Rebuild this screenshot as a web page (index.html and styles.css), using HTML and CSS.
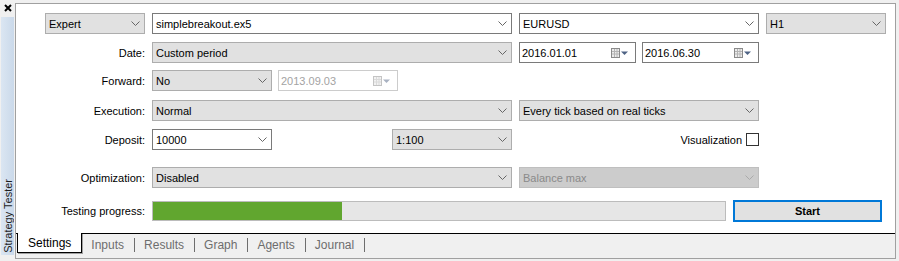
FILE: index.html
```html
<!DOCTYPE html>
<html lang="en">
<head>
  <meta charset="UTF-8">
  <title>Strategy Tester</title>
  <link rel="stylesheet" href="styles.css">
</head>
<body>
  <div class="app">
    <aside class="dock">
      <div class="dock-close">
        <svg width="8" height="8" viewBox="0 0 8 8"><path d="M1 1L7 7M7 1L1 7" stroke="#000" stroke-width="2"/></svg>
      </div>
      <div class="dock-tab"><span>Strategy Tester</span></div>
    </aside>

    <div class="window">
      <div class="panel">
        <div class="row r1">
          <div class="select gray w100"><span>Expert</span><svg class="chev" width="9" height="5" viewBox="0 0 9 5"><path d="M0.5 0.5L4.5 4.5L8.5 0.5" fill="none" stroke="#666"/></svg></div>
          <div class="select white w360 ml7"><span>simplebreakout.ex5</span><svg class="chev" width="9" height="5" viewBox="0 0 9 5"><path d="M0.5 0.5L4.5 4.5L8.5 0.5" fill="none" stroke="#666"/></svg></div>
          <div class="select white w240 ml7"><span>EURUSD</span><svg class="chev" width="9" height="5" viewBox="0 0 9 5"><path d="M0.5 0.5L4.5 4.5L8.5 0.5" fill="none" stroke="#666"/></svg></div>
          <div class="select gray w120 ml7"><span>H1</span><svg class="chev" width="9" height="5" viewBox="0 0 9 5"><path d="M0.5 0.5L4.5 4.5L8.5 0.5" fill="none" stroke="#666"/></svg></div>
        </div>

        <div class="row r2">
          <label class="label">Date:</label>
          <div class="select gray w360"><span>Custom period</span><svg class="chev" width="9" height="5" viewBox="0 0 9 5"><path d="M0.5 0.5L4.5 4.5L8.5 0.5" fill="none" stroke="#666"/></svg></div>
          <div class="date w117 ml7"><span>2016.01.01</span>
            <svg class="cal" width="17" height="10" viewBox="0 0 17 10"><rect x="0.5" y="0.5" width="8" height="9" fill="#ececec" stroke="#8a8a8a"/><path d="M3.5 1V9M6 1V9M1 3.5H8M1 6H8" stroke="#b4b4b4"/><path d="M10 3.5H17L13.5 7Z" fill="#4e6385"/></svg>
          </div>
          <div class="date w117 ml6"><span>2016.06.30</span>
            <svg class="cal" width="17" height="10" viewBox="0 0 17 10"><rect x="0.5" y="0.5" width="8" height="9" fill="#ececec" stroke="#8a8a8a"/><path d="M3.5 1V9M6 1V9M1 3.5H8M1 6H8" stroke="#b4b4b4"/><path d="M10 3.5H17L13.5 7Z" fill="#4e6385"/></svg>
          </div>
        </div>

        <div class="row r3">
          <label class="label">Forward:</label>
          <div class="select gray w120"><span>No</span><svg class="chev" width="9" height="5" viewBox="0 0 9 5"><path d="M0.5 0.5L4.5 4.5L8.5 0.5" fill="none" stroke="#666"/></svg></div>
          <div class="date disabled w120 ml6"><span>2013.09.03</span>
            <svg class="cal" width="17" height="10" viewBox="0 0 17 10"><rect x="0.5" y="0.5" width="8" height="9" fill="#f2f2f2" stroke="#c4c4c4"/><path d="M3.5 1V9M6 1V9M1 3.5H8M1 6H8" stroke="#dadada"/><path d="M10 3.5H17L13.5 7Z" fill="#a9b2c2"/></svg>
          </div>
        </div>

        <div class="row r4">
          <label class="label">Execution:</label>
          <div class="select gray w360"><span>Normal</span><svg class="chev" width="9" height="5" viewBox="0 0 9 5"><path d="M0.5 0.5L4.5 4.5L8.5 0.5" fill="none" stroke="#666"/></svg></div>
          <div class="select gray w240 ml7"><span>Every tick based on real ticks</span><svg class="chev" width="9" height="5" viewBox="0 0 9 5"><path d="M0.5 0.5L4.5 4.5L8.5 0.5" fill="none" stroke="#666"/></svg></div>
        </div>

        <div class="row r5">
          <label class="label">Deposit:</label>
          <div class="select white w120"><span>10000</span><svg class="chev" width="9" height="5" viewBox="0 0 9 5"><path d="M0.5 0.5L4.5 4.5L8.5 0.5" fill="none" stroke="#666"/></svg></div>
          <div class="select gray w120 ml120"><span>1:100</span><svg class="chev" width="9" height="5" viewBox="0 0 9 5"><path d="M0.5 0.5L4.5 4.5L8.5 0.5" fill="none" stroke="#666"/></svg></div>
          <div class="visual">
            <span>Visualization</span>
            <span class="checkbox"></span>
          </div>
        </div>

        <div class="row r6">
          <label class="label">Optimization:</label>
          <div class="select gray w360"><span>Disabled</span><svg class="chev" width="9" height="5" viewBox="0 0 9 5"><path d="M0.5 0.5L4.5 4.5L8.5 0.5" fill="none" stroke="#666"/></svg></div>
          <div class="select off w240 ml7"><span>Balance max</span><svg class="chev" width="9" height="5" viewBox="0 0 9 5"><path d="M0.5 0.5L4.5 4.5L8.5 0.5" fill="none" stroke="#aaa"/></svg></div>
        </div>

        <div class="row r7">
          <label class="label">Testing progress:</label>
          <div class="progress"><div class="progress-fill" style="width: 33%;"></div></div>
          <button class="start">Start</button>
        </div>
      </div>

      <div class="tabbar">
        <div class="tab active">Settings</div>
        <div class="tab">Inputs</div>
        <div class="tab">Results</div>
        <div class="tab">Graph</div>
        <div class="tab">Agents</div>
        <div class="tab">Journal</div>
      </div>
    </div>
  </div>
</body>
</html>
```

FILE: styles.css
```css
html, body {
  margin: 0;
  background: #f0f0f0;
}
body {
  font-family: "Liberation Sans", Arial, sans-serif;
  font-size: 11px;
  color: #000;
}
.app {
  display: flex;
  width: 899px;
  height: 261px;
}

/* left dock strip */
.dock {
  width: 15px;
  display: flex;
  flex-direction: column;
}
.dock-close {
  height: 17px;
  box-sizing: border-box;
  padding: 4px 0 0 4px;
}
.dock-close svg { display: block; }
.dock-tab {
  flex: 1;
  margin: 0 1px 6px 1px;
  background: linear-gradient(to right, #dbe6f2, #cad9ea);
  display: flex;
  flex-direction: column;
  justify-content: flex-end;
  align-items: center;
}
.dock-tab span {
  writing-mode: vertical-rl;
  transform: rotate(180deg);
  padding-top: 2px;
  font-size: 11px;
  color: #1e1e1e;
  white-space: nowrap;
}

/* window */
.window {
  margin-top: 3px;
  width: 881px;
  height: 256px;
  box-sizing: border-box;
  border: 1px solid #a0a0a0;
  display: flex;
  flex-direction: column;
}
.panel {
  height: 229px;
  background: #fff;
  padding-left: 29px;
  padding-top: 9px;
  box-sizing: border-box;
}
.row {
  display: flex;
  align-items: center;
  height: 21px;
}
.r2 { margin-top: 8px; }
.r3 { margin-top: 7px; }
.r4 { margin-top: 9px; }
.r5 { margin-top: 8px; }
.r6 { margin-top: 17px; }
.r7 { margin-top: 12px; height: 22px; }

.label {
  width: 100px;
  margin-right: 7px;
  text-align: right;
  white-space: nowrap;
}

.select, .date {
  height: 21px;
  box-sizing: border-box;
  display: flex;
  align-items: center;
  border: 1px solid #adadad;
  white-space: nowrap;
}
.select { padding: 0 4px 0 3px; }
.select span, .date span { flex: 1; }
.select.gray { background: #e1e1e1; }
.select.white { background: #fff; border-color: #7a7a7a; }
.select.off { background: #cccccc; border-color: #bfbfbf; color: #8a8a8a; }
.chev { display: block; }

.date {
  background: #fff;
  border-color: #7a7a7a;
  padding: 0 7px 0 2px;
}
.date.disabled { border-color: #cccccc; color: #a3a3a3; }
.cal { display: block; }

.w100 { width: 100px; }
.w117 { width: 117px; }
.w120 { width: 120px; }
.w240 { width: 240px; }
.w360 { width: 360px; }
.ml6 { margin-left: 6px; }
.ml7 { margin-left: 7px; }
.ml120 { margin-left: 120px; }

.visual {
  width: 247px;
  display: flex;
  justify-content: flex-end;
  align-items: center;
  gap: 4px;
}
.checkbox {
  width: 13px;
  height: 13px;
  box-sizing: border-box;
  border: 1px solid #333;
  background: #fff;
}

.progress {
  width: 574px;
  height: 20px;
  box-sizing: border-box;
  border: 1px solid #bcbcbc;
  background: #e6e6e6;
}
.progress-fill {
  height: 100%;
  background: #61a62f;
}
.start {
  margin-left: 7px;
  width: 149px;
  height: 22px;
  box-sizing: border-box;
  border: 2px solid #0078d7;
  background: #e1e1e1;
  font-family: "Liberation Sans", Arial, sans-serif;
  font-size: 11px;
  font-weight: bold;
  color: #000;
  padding: 0;
}

/* bottom tabs */
.tabbar {
  flex: 1;
  border-top: 1px solid #000;
  display: flex;
  align-items: flex-start;
  padding-left: 1px;
  font-size: 12px;
}
.tab {
  color: #6d6d6d;
  padding: 0 10px 0 9px;
  margin-top: 4px;
  height: 14px;
  line-height: 14px;
  border-right: 1px solid #6d6d6d;
}
.tab.active {
  color: #000;
  background: #fff;
  margin-top: -1px;
  height: 20px;
  line-height: 20px;
  box-sizing: border-box;
  padding: 0 10px;
  border: 1px solid #000;
  border-top: none;
  box-shadow: 1px 1px 0 #a0a0a0;
}
```
